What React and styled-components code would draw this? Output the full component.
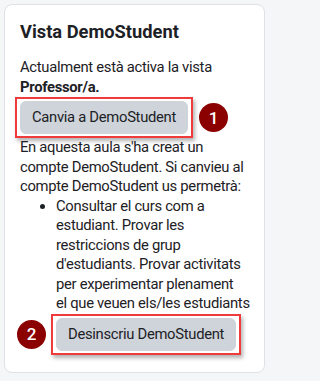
import React from 'react';
import styled, { createGlobalStyle } from 'styled-components';

const GlobalStyle = createGlobalStyle`
  html, body {
    margin: 0;
    padding: 0;
    background: #f5f6f8;
  }
  body {
    font-family: Roboto, "Liberation Sans", sans-serif;
    color: #1d2125;
  }
`;

const Page = styled.div`
  padding: 4px 7px 8px 4px;
`;

const Card = styled.section`
  box-sizing: border-box;
  width: 261px;
  height: 369px;
  background: #fff;
  border: 1px solid #dee2e6;
  border-radius: 8px;
  padding: 16px 12px 0 15px;
`;

const Title = styled.h5`
  margin: 0 0 15px;
  font-size: 18.3px;
  font-weight: 700;
  line-height: 22px;
`;

const Text = styled.p`
  margin: 0;
  font-size: 14.8px;
  letter-spacing: -0.3px;
  line-height: 19.5px;
`;

const List = styled.ul`
  margin: 0;
  padding-left: 36px;
  font-size: 14.8px;
  letter-spacing: -0.3px;
  line-height: 19.5px;
`;

const Row = styled.div`
  display: flex;
  align-items: center;
  gap: ${(p) => p.gap}px;
  margin-left: ${(p) => p.shift || 0}px;
`;

const Highlight = styled.div`
  display: inline-flex;
  border: 2px solid #ef3b3b;
  padding: 2px 3px;
  box-shadow: 2px 3px 4px rgba(0, 0, 0, 0.3);
`;

const Button = styled.button`
  font-family: inherit;
  font-size: 14.8px;
  letter-spacing: -0.3px;
  line-height: 20px;
  color: #1d2125;
  background: #ced4da;
  border: 1px solid #ced4da;
  border-radius: 6px;
  padding: 5px ${(p) => p.px}px 6px;
  cursor: pointer;
`;

const Badge = styled.span`
  display: inline-flex;
  align-items: center;
  justify-content: center;
  width: 29px;
  height: 29px;
  border-radius: 50%;
  background: #8b0000;
  color: #fff;
  font-size: 17px;
  font-weight: 500;
`;

export default function App() {
  return (
    <>
      <GlobalStyle />
      <Page>
        <Card>
          <Title>Vista DemoStudent</Title>
          <Text>
            Actualment està activa la vista <b>Professor/a.</b>
          </Text>
          <Row gap={6} shift={-5}>
            <Highlight>
              <Button px={11}>Canvia a DemoStudent</Button>
            </Highlight>
            <Badge>1</Badge>
          </Row>
          <Text>
            En aquesta aula s'ha creat un compte DemoStudent. Si canvieu al compte
            DemoStudent us permetrà:
          </Text>
          <List>
            <li>
              Consultar el curs com a estudiant. Provar les restriccions de grup
              d'estudiants. Provar activitats per experimentar plenament
              <br />
              el que veuen els/les estudiants
            </li>
          </List>
          <Row gap={5} shift={-3}>
            <Badge>2</Badge>
            <Highlight>
              <Button px={11}>Desinscriu DemoStudent</Button>
            </Highlight>
          </Row>
        </Card>
      </Page>
    </>
  );
}
